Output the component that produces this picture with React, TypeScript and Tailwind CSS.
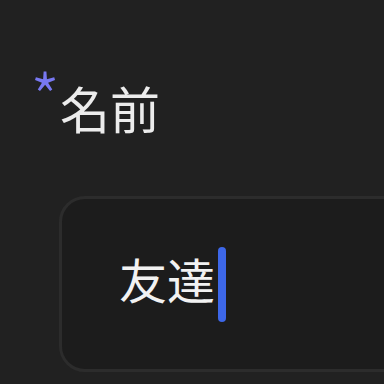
export default function App() {
  return (
    <div
      className="h-screen w-full overflow-hidden bg-[#212121] pl-[30px] pt-[72px]"
      style={{ fontFamily: '"Noto Sans CJK JP", "Noto Sans", sans-serif' }}
    >
      <div className="flex items-start">
        <span className="w-[30px] text-[68px] font-light leading-[0.7] text-[#7878f2]">*</span>
        <span className="text-[50px] leading-[1.4] text-[#ececec]">名前</span>
      </div>
      <div className="ml-[29px] mt-[54px] flex h-[176px] w-[360px] items-center rounded-[26px] border-[3px] border-[#2c2c2c] bg-[#1c1c1c] pl-[57px]">
        <span className="mb-[12px] text-[48px] leading-none text-[#f2f2f2]">友達</span>
        <span className="ml-[3px] h-[75px] w-[8px] rounded-full bg-[#3d67e8]" />
      </div>
    </div>
  );
}
